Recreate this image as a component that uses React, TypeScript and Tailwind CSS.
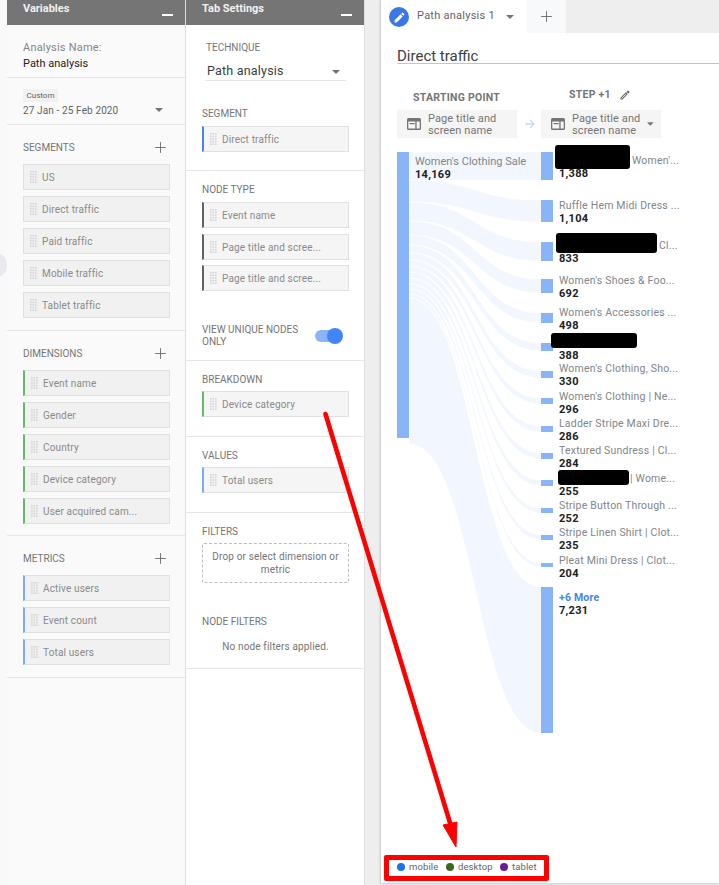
import React from "react";
import { MdEdit, MdOutlineEdit } from "react-icons/md";
import { Plus } from "lucide-react";

const Caret = ({ className = "" }: { className?: string }) => (
  <svg width="8" height="4" viewBox="0 0 8 4" className={className}>
    <path d="M0 0h8L4 4z" fill="#757575" />
  </svg>
);

const Grip = () => (
  <svg width="7" height="12" viewBox="0 0 7 12" className="shrink-0">
    {[0, 1, 2, 3, 4].map((r) =>
      [0, 1, 2].map((c) => (
        <rect key={`${r}-${c}`} x={c * 2.5} y={r * 2.6} width="1.6" height="1.6" fill="#d4d4d4" />
      ))
    )}
  </svg>
);

const Chip = ({
  label,
  accent = "",
  bg = "bg-[#f1f1f1]",
}: {
  label: string;
  accent?: string;
  bg?: string;
}) => (
  <div
    className={`h-[26px] w-[147px] flex items-center gap-[5px] pl-[6px] ${bg} border border-[#e0e0e0] ${accent} text-[10px] tracking-[0.15px] text-[#8a8a8a] whitespace-nowrap overflow-hidden`}
  >
    <Grip />
    <span className="pt-[1px]">{label}</span>
  </div>
);

const Label = ({ children, className = "" }: { children: React.ReactNode; className?: string }) => (
  <div className={`h-[16px] leading-[16px] text-[10px] text-[#757575] ${className}`}>{children}</div>
);

const VarSection = ({
  title,
  chips,
  accent,
  className,
}: {
  title: string;
  chips: string[];
  accent: string;
  className: string;
}) => (
  <div className={`border-b border-[#e6e6e6] pl-4 pr-[15px] ${className}`}>
    <div className="flex items-center justify-between">
      <Label>{title}</Label>
      <Plus size={17} strokeWidth={1.2} color="#616161" className="mr-[1px]" />
    </div>
    <div className="flex flex-col gap-[6px] mt-[8px]">
      {chips.map((c) => (
        <Chip key={c} label={c} accent={accent} />
      ))}
    </div>
  </div>
);

const Variables = () => (
  <div className="w-[179px] shrink-0 bg-[#fafafa] border-r border-[#e0e0e0]">
    <div className="h-[25px] bg-[#757575] flex justify-between pl-4 pr-3 text-white">
      <span className="text-[11px] font-bold leading-[18px] text-[#f1f1f1]">Variables</span>
      <span className="w-[11px] h-[1.5px] bg-white mt-[14px]" />
    </div>
    <div className="h-[53px] border-b border-[#e6e6e6] pl-4 pt-[15px] text-[11px] leading-[16px]">
      <div className="text-[#80868b] tracking-[0.2px]">Analysis Name:</div>
      <div className="text-[#212121]">Path analysis</div>
    </div>
    <div className="h-[47px] border-b border-[#e6e6e6] pl-4 pr-[22px] pt-[11px]">
      <div className="w-[35px] h-[13px] bg-[#f1f1f1] text-[8px] leading-[13px] text-center text-[#616161]">Custom</div>
      <div className="flex items-center justify-between mt-[1px] h-[14px] text-[10px] tracking-[0.12px] text-[#5f6368]">
        <span>27 Jan - 25 Feb 2020</span>
        <Caret />
      </div>
    </div>
    <VarSection
      title="SEGMENTS"
      accent=""
      className="pt-[14px] pb-[12px]"
      chips={["US", "Direct traffic", "Paid traffic", "Mobile traffic", "Tablet traffic"]}
    />
    <VarSection
      title="DIMENSIONS"
      accent="border-l-2 border-l-[#66bb6a]"
      className="pt-[14px] pb-[11px]"
      chips={["Event name", "Gender", "Country", "Device category", "User acquired cam..."]}
    />
    <VarSection
      title="METRICS"
      accent="border-l-2 border-l-[#7baaf7]"
      className="pt-[14px] pb-[12px]"
      chips={["Active users", "Event count", "Total users"]}
    />
  </div>
);

const settingChip = (label: string, accent: string) => (
  <Chip key={label} label={label} accent={accent} bg="bg-[#f5f5f5]" />
);

const TabSettings = () => (
  <div className="w-[179px] shrink-0 bg-white border-r border-[#e0e0e0]">
    <div className="h-[25px] bg-[#757575] flex justify-between pl-4 pr-3">
      <span className="text-[11px] font-bold leading-[18px] text-[#f1f1f1]">Tab Settings</span>
      <span className="w-[11px] h-[1.5px] bg-white mt-[14px]" />
    </div>
    <div className="h-[146px] border-b border-[#e6e6e6] pl-4 pt-[15px]">
      <Label className="pl-[4px]">TECHNIQUE</Label>
      <div className="ml-[3px] w-[141px] h-[24px] mt-[1px] pt-[6px] border-b border-[#e6e6e6] flex items-center justify-between pl-[2px] pr-[6px] text-[12.5px] tracking-[0.2px] text-[#3c4043]">
        <span>Path analysis</span>
        <Caret />
      </div>
      <Label className="mt-[25px]">SEGMENT</Label>
      <div className="mt-[4px]">{settingChip("Direct traffic", "border-l-2 border-l-[#4285f4]")}</div>
    </div>
    <div className="h-[190px] border-b border-[#e6e6e6] pl-4 pt-[11px]">
      <Label>NODE TYPE</Label>
      <div className="flex flex-col gap-[5.5px] mt-[4px]">
        {settingChip("Event name", "border-l-2 border-l-[#5f6368]")}
        {settingChip("Page title and scree...", "border-l-2 border-l-[#5f6368]")}
        {settingChip("Page title and scree...", "border-l-2 border-l-[#5f6368]")}
      </div>
      <div className="flex items-center justify-between mt-[33px] pr-[24px]">
        <div className="text-[10px] leading-[12px] text-[#757575] w-[100px]">VIEW UNIQUE NODES ONLY</div>
        <div className="relative w-[25px] h-[12px] rounded-full bg-[#8ab4f8]">
          <span className="absolute right-[-3px] top-[-2px] w-4 h-4 rounded-full bg-[#4285f4]" />
        </div>
      </div>
    </div>
    <div className="h-[76px] border-b border-[#e6e6e6] pl-4 pt-[11px]">
      <Label>BREAKDOWN</Label>
      <div className="mt-[3px]">{settingChip("Device category", "border-l-2 border-l-[#66bb6a]")}</div>
    </div>
    <div className="h-[76px] border-b border-[#e6e6e6] pl-4 pt-[11px]">
      <Label>VALUES</Label>
      <div className="mt-[3px]">{settingChip("Total users", "border-l-2 border-l-[#7baaf7]")}</div>
    </div>
    <div className="h-[156px] border-b border-[#e6e6e6] pl-4 pt-[11px]">
      <Label>FILTERS</Label>
      <div className="mt-[3px] w-[147px] h-[40px] border border-dashed border-[#bdbdbd] rounded-[2px] text-center text-[10px] leading-[13px] tracking-[0.15px] text-[#757575] pt-[6px] px-1">
        Drop or select dimension or metric
      </div>
      <Label className="mt-[31px]">NODE FILTERS</Label>
      <div className="w-[147px] mt-[10px] text-center text-[10px] leading-[14px] tracking-[0.15px] text-[#757575]">
        No node filters applied.
      </div>
    </div>
  </div>
);

const SelectorIcon = () => (
  <svg width="14" height="12" viewBox="0 0 14 12" className="shrink-0">
    <path
      fillRule="evenodd"
      d="M1.5 0h11A1.5 1.5 0 0 1 14 1.5v9a1.5 1.5 0 0 1-1.5 1.5h-11A1.5 1.5 0 0 1 0 10.5v-9A1.5 1.5 0 0 1 1.5 0zM1.3 3.6v7h7v-7zm8.3 0v7h3.1v-7z"
      fill="#757575"
    />
    <rect x="2.6" y="5" width="5" height="1.2" fill="#757575" />
  </svg>
);

const Selector = ({ caret = false }: { caret?: boolean }) => (
  <div className="w-[120px] h-[28px] bg-[#f5f5f5] flex items-center pl-[10px] pr-[7px] gap-[7px] text-[11px] leading-[12px] tracking-[0.1px] text-[#757575]">
    <SelectorIcon />
    <div className="whitespace-nowrap pt-[1px]">
      Page title and
      <br />
      screen name
    </div>
    {caret && <Caret className="ml-auto" />}
  </div>
);

type Node = { top: number; h: number; label: string; value: string; labelTop: number; indent?: number; more?: boolean };

const nodes: Node[] = [
  { top: 153, h: 28, label: "Women'...", value: "1,388", labelTop: 155, indent: 73 },
  { top: 201, h: 22, label: "Ruffle Hem Midi Dress ...", value: "1,104", labelTop: 200 },
  { top: 243, h: 19, label: "Cl...", value: "833", labelTop: 240, indent: 100 },
  { top: 280, h: 14, label: "Women's Shoes & Foo...", value: "692", labelTop: 275 },
  { top: 314, h: 10, label: "Women's Accessories ...", value: "498", labelTop: 307 },
  { top: 344, h: 8, label: "", value: "388", labelTop: 337 },
  { top: 372, h: 7, label: "Women's Clothing, Sho...", value: "330", labelTop: 363 },
  { top: 399, h: 6, label: "Women's Clothing | Ne...", value: "296", labelTop: 391 },
  { top: 427, h: 6, label: "Ladder Stripe Maxi Dre...", value: "286", labelTop: 418 },
  { top: 454, h: 6, label: "Textured Sundress | Cl...", value: "284", labelTop: 445 },
  { top: 481, h: 6, label: "| Wome...", value: "255", labelTop: 473, indent: 71 },
  { top: 509, h: 5, label: "Stripe Button Through ...", value: "252", labelTop: 500 },
  { top: 536, h: 5, label: "Stripe Linen Shirt | Clot...", value: "235", labelTop: 527 },
  { top: 564, h: 4, label: "Pleat Mini Dress | Clot...", value: "204", labelTop: 555 },
  { top: 588, h: 146, label: "+6 More", value: "7,231", labelTop: 592, more: true },
];

const CHART_TOP = 145;
const redactions = [
  { left: 555, top: 146, w: 75, h: 24 },
  { left: 556, top: 234, w: 101, h: 20 },
  { left: 551, top: 334, w: 86, h: 15 },
  { left: 558, top: 471, w: 71, h: 15 },
];

const ribbons = (() => {
  let y = 153 - CHART_TOP;
  return nodes.map((n) => {
    const y0 = y;
    y += n.h;
    const t = n.top - CHART_TOP;
    const x0 = 28;
    const x1 = 160;
    const m = 94;
    return `M${x0} ${y0}C${m} ${y0} ${m} ${t} ${x1} ${t}V${t + n.h}C${m} ${t + n.h} ${m} ${y0 + n.h} ${x0} ${y0 + n.h}Z`;
  });
})();

const Chart = () => (
  <div className="relative h-[600px] overflow-hidden">
    <svg width="338" height="600" className="absolute left-0 top-0">
      {ribbons.map((d, i) => (
        <path key={i} d={d} fill="#f2f6fe" stroke="#ffffff" strokeWidth="0.6" />
      ))}
    </svg>
    <div className="absolute left-[16px] top-[8px] w-3 h-[286px] bg-[#8ab4f8]" />
    <div className="absolute left-[34px] top-[11px] text-[11px] leading-[13px] text-[#80868b] whitespace-nowrap">
      Women's Clothing Sale
      <div className="font-bold text-[#212121] tracking-[0.3px]">14,169</div>
    </div>
    {nodes.map((n) => (
      <React.Fragment key={n.value}>
        <div
          className="absolute left-[160px] w-3 bg-[#8ab4f8]"
          style={{ top: n.top - CHART_TOP, height: n.h }}
        />
        <div
          className="absolute left-[178px] text-[10.5px] leading-[13px] tracking-[0.2px] whitespace-nowrap"
          style={{ top: n.labelTop - CHART_TOP }}
        >
          <div className={`h-[13px] ${n.more ? "font-bold text-[#4285f4]" : "text-[#80868b]"}`} style={{ paddingLeft: n.indent ?? 0 }}>
            {n.label}
          </div>
          <div className="text-[11px] font-bold text-[#212121] tracking-[0.3px]">{n.value}</div>
        </div>
      </React.Fragment>
    ))}
    {redactions.map((r) => (
      <div
        key={r.left}
        className="absolute bg-black rounded-[3px]"
        style={{ left: r.left - 381, top: r.top - CHART_TOP, width: r.w, height: r.h }}
      />
    ))}
  </div>
);

const Legend = () => (
  <div className="h-[26px] mt-[110px] pl-[16px] flex items-center text-[9.5px] tracking-[0.1px] text-[#5f6368]">
    <span className="w-2 h-2 rounded-full bg-[#1a73e8] mr-1" />
    <span className="mr-[7px] w-[30px]">mobile</span>
    <span className="w-2 h-2 rounded-full bg-[#38691d] mr-1" />
    <span className="mr-[7px] w-[35px]">desktop</span>
    <span className="w-2 h-2 rounded-full bg-[#6a1b9a] mr-1" />
    <span>tablet</span>
  </div>
);

const Main = () => (
  <div className="flex-1 min-w-0 bg-white border-l border-[#d0d0d0] h-[883px] shadow-sm">
    <div className="h-[33px] flex bg-[#eeeeee]">
      <div className="w-[145px] bg-white flex items-center pl-[8px] h-[33px]">
        <span className="w-5 h-5 rounded-full bg-[#3b78e7] flex items-center justify-center mt-[1px]">
          <MdEdit size={13} color="#ffffff" />
        </span>
        <span className="ml-2 text-[11px] tracking-[0.25px] text-[#5f6368] w-[76px] whitespace-nowrap mb-[1px]">Path analysis 1</span>
        <Caret className="ml-[13px]" />
      </div>
      <div className="w-[40px] bg-[#f8f9fa] flex items-center justify-center">
        <Plus size={17} strokeWidth={1.2} color="#616161" />
      </div>
    </div>
    <div className="ml-4 h-[31px] border-b border-[#c4c4c4] pt-[14px] text-[15px] leading-[18px] text-[#3c4043]">
      Direct traffic
    </div>
    <div className="flex ml-4 gap-6 mt-[24px] h-[17px] text-[10.5px] font-bold tracking-[0.25px] text-[#757575]">
      <div className="w-[120px] pl-4 pt-[2px]">STARTING POINT</div>
      <div className="flex items-center gap-[8px] pl-7 mt-[-4px]">
        STEP +1
        <MdOutlineEdit size={12} color="#616161" />
      </div>
    </div>
    <div className="relative flex ml-4 gap-6 mt-[5px]">
      <Selector />
      <Selector caret />
      <svg width="10" height="10" viewBox="0 0 10 10" className="absolute left-[128px] top-[9px]">
        <path d="M0 5h8.5M5 1l4 4-4 4" fill="none" stroke="#c6dafc" strokeWidth="1.3" />
      </svg>
    </div>
    <div className="mt-[6px]">
      <Chart />
    </div>
    <Legend />
  </div>
);

const App = () => (
  <div className="relative w-[719px] h-[885px] overflow-hidden flex bg-[#eeeeee] [font-family:Roboto,sans-serif]">
    <div className="relative w-[7px] shrink-0 h-full bg-[#f8f9fa] overflow-hidden">
      <span className="absolute left-[-19px] top-[252px] w-[26px] h-[26px] rounded-full bg-[#e8eaed]" />
    </div>
    <Variables />
    <TabSettings />
    <div className="w-[15px] shrink-0" />
    <Main />
    {/* annotation drawn on top of the screenshot */}
    <svg width="719" height="885" className="absolute left-0 top-0 pointer-events-none">
      <path d="M325.5 414L451 826" stroke="#ff0000" strokeWidth="4.6" strokeLinecap="round" fill="none" />
      <path d="M443 825L457 822L456 847Z" fill="#ff0000" stroke="#ff0000" strokeWidth="1" />
    </svg>
    <div className="absolute left-[384px] top-[855px] w-[165px] h-[26px] border-[5px] border-[#ff0000] rounded-[2px]" />
  </div>
);

export default App;
